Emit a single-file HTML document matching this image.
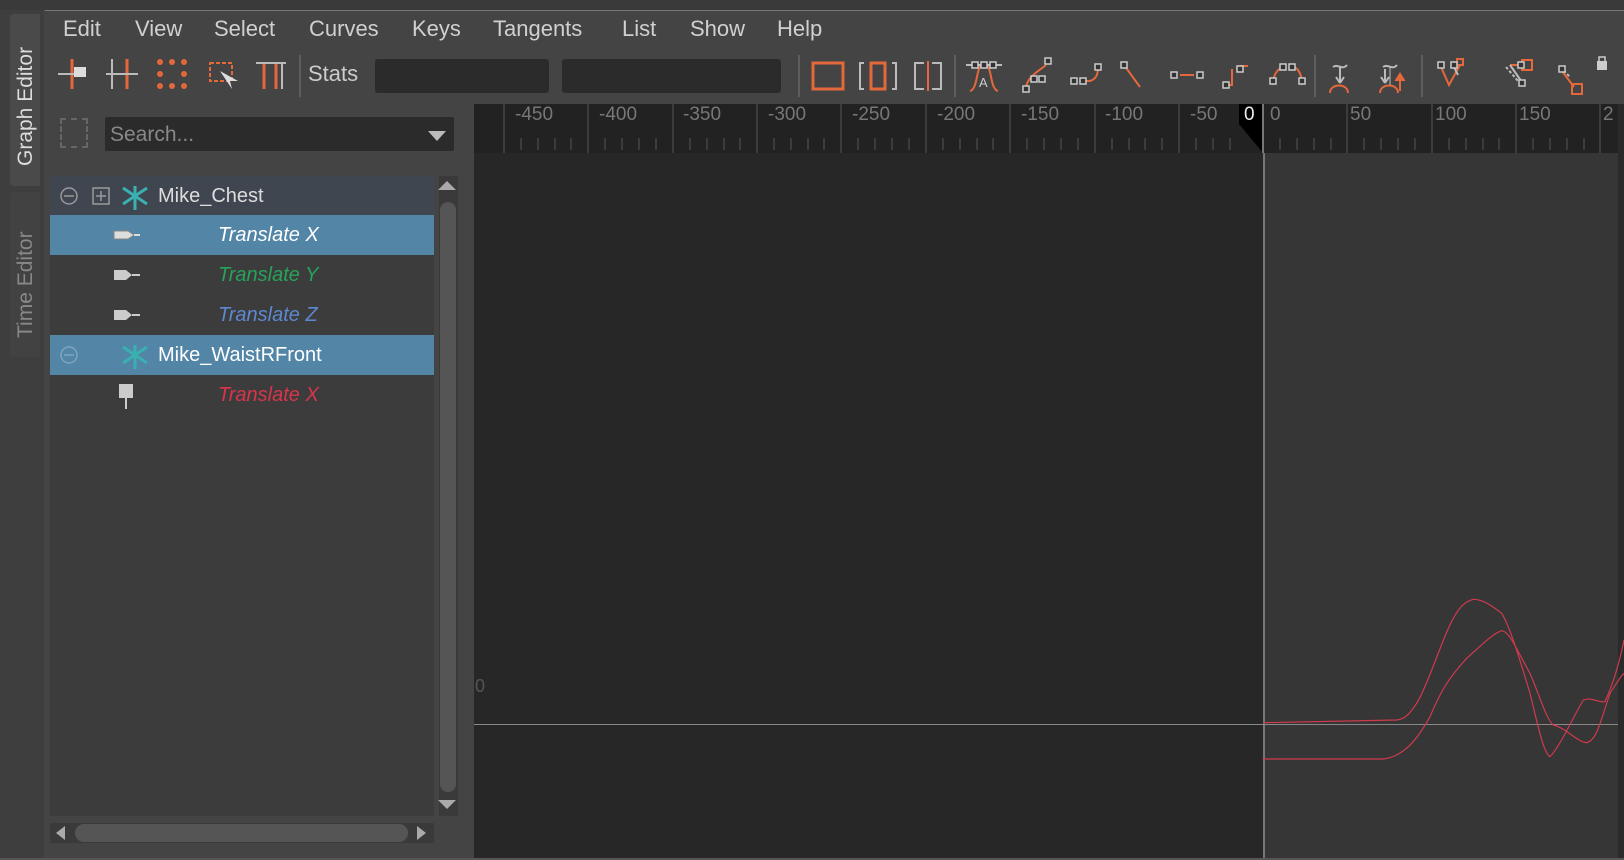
<!DOCTYPE html>
<html><head><style>
body{margin:0;width:1624px;height:860px;background:#444;overflow:hidden;font-family:"Liberation Sans",sans-serif;position:relative}
.a{position:absolute}
.menu span{position:absolute;top:16px;font-size:22px;color:#d0d0d0}
.tab{position:absolute;left:10px;width:30px;background:#4a4a4a;border-radius:4px 0 0 4px}
.vt{position:absolute;transform:rotate(-90deg);transform-origin:left top;font-size:21px;white-space:nowrap}
.row{position:absolute;left:50px;width:384px;height:40px}
.row span{position:absolute;top:9px;font-size:20px}
.it{font-style:italic}
.rl{position:absolute;top:104px;font-size:19px;color:#777}
</style></head><body>
<div class="a" style="left:0;top:0;width:1624px;height:10px;background:#3a3a3a;border-bottom:1px solid #555"></div>
<div class="a" style="left:0;top:10px;width:44px;height:850px;background:#3e3e3e"></div>
<div class="tab" style="top:14px;height:172px"></div>
<div class="vt" style="left:14px;top:166px;color:#ddd">Graph Editor</div>
<div class="tab" style="top:192px;height:165px;background:#424242"></div>
<div class="vt" style="left:14px;top:338px;color:#888">Time Editor</div>
<div class="a" style="left:45px;top:10px;width:1579px;height:1px;background:#777"></div>
<div class="menu">
<span style="left:63px">Edit</span><span style="left:135px">View</span><span style="left:214px">Select</span><span style="left:309px">Curves</span><span style="left:412px">Keys</span><span style="left:493px">Tangents</span><span style="left:622px">List</span><span style="left:690px">Show</span><span style="left:777px">Help</span>
</div>
<!-- toolbar -->
<svg class="a" style="left:0;top:55px" width="1624" height="42" fill="none" stroke-width="3">
<defs><g id="k"><rect x="-3" y="-3" width="6" height="6" fill="#333" stroke="#ccc" stroke-width="1.5"/></g></defs>
<g stroke="#e4693a">
<line x1="72" y1="4" x2="72" y2="34"/><line x1="127" y1="4" x2="127" y2="34"/>
<g fill="#e4693a" stroke="none"><circle cx="160" cy="7" r="3"/><circle cx="172" cy="7" r="3"/><circle cx="184" cy="7" r="3"/><circle cx="160" cy="19" r="3"/><circle cx="184" cy="19" r="3"/><circle cx="160" cy="31" r="3"/><circle cx="172" cy="31" r="3"/><circle cx="184" cy="31" r="3"/></g>
<rect x="210" y="8" width="22" height="18" stroke-width="2" stroke-dasharray="4 2"/>
<path d="M264 8V34M276 8V34"/>
<rect x="813" y="8" width="30" height="26"/><rect x="871" y="8" width="14" height="26"/><line x1="928" y1="6" x2="928" y2="36" stroke-width="2"/>
<!-- tangents -->
<path d="M970 36C978 34 976 12 982 10M986 10C992 12 990 34 998 36" stroke-width="2"/>
<path d="M1026 32C1028 22 1036 18 1046 10" stroke-width="2"/>
<path d="M1080 26H1090C1096 24 1098 20 1098 12" stroke-width="2"/>
<path d="M1124 10L1140 32" stroke-width="2"/>
<path d="M1180 20H1194" stroke-width="2"/>
<path d="M1226 30H1232V14M1240 11H1248" stroke-width="2"/>
<path d="M1273 30C1273 16 1281 12 1285 12M1292 12C1296 12 1302 16 1302 30" stroke-width="2"/>
<path d="M1330 38C1330 28 1348 28 1348 38M1380 38C1380 28 1398 28 1398 38M1400 22V36" stroke-width="2"/>
<path d="M1395 26L1400 18L1405 26" fill="#e4693a" stroke-width="1"/>
<path d="M1441 12L1449 30L1460 10M1510 10H1522M1562 16L1574 32" stroke-width="2"/>
<rect x="1457" y="4" width="6" height="6" stroke-width="2"/><rect x="1522" y="5" width="10" height="10" stroke-width="2"/><rect x="1572" y="29" width="10" height="10" stroke-width="2"/>
</g>
<g stroke="#bbb"><path d="M58 19H86M106 19H138M112 4V34" stroke-width="2"/><path d="M256 8H286M282 8V34" stroke-width="2"/>
<path d="M864 8H860V34H864M892 8H896V34H892M924 8H915V34H924M932 8H941V34H932" stroke-width="2"/>
<path d="M966 10H1002M1333 12C1338 8 1342 16 1347 10M1383 12C1388 8 1392 16 1397 10M1340 12V28M1385 14V28" stroke-width="2"/>
<path d="M1340 28L1336 22M1340 28L1344 22M1385 28L1381 22M1385 28L1389 22" stroke-width="2"/>
<path d="M1390 12V30" stroke-width="1"/>
<path d="M1454 12L1458 20M1510 10L1524 30" stroke-width="2"/>
<path d="M1506 12L1518 26M1560 12L1570 22" stroke-width="2" stroke-dasharray="3 2"/></g>
<use href="#k" x="975" y="10"/><use href="#k" x="984" y="10"/><use href="#k" x="993" y="10"/>
<use href="#k" x="1026" y="34"/><use href="#k" x="1034" y="24"/><use href="#k" x="1042" y="24"/><use href="#k" x="1048" y="6"/>
<use href="#k" x="1074" y="26"/><use href="#k" x="1083" y="26"/><use href="#k" x="1098" y="12"/>
<use href="#k" x="1124" y="10"/>
<use href="#k" x="1174" y="20"/><use href="#k" x="1200" y="20"/>
<use href="#k" x="1226" y="30"/><use href="#k" x="1240" y="14"/>
<use href="#k" x="1273" y="26"/><use href="#k" x="1283" y="12"/><use href="#k" x="1292" y="12"/><use href="#k" x="1302" y="26"/>
<use href="#k" x="1441" y="10"/><use href="#k" x="1454" y="10"/><use href="#k" x="1521" y="10"/><use href="#k" x="1522" y="28"/><use href="#k" x="1562" y="14"/>
<rect x="74" y="12" width="12" height="10" fill="#ddd"/>
<path d="M220 16L232 34L230 26L238 26Z" fill="#ddd"/>
<text x="979" y="32" fill="#ccc" font-size="13" font-family="Liberation Sans">A</text>
<rect x="1597" y="6" width="10" height="9" fill="#ccc"/><path d="M1599 6V2H1605V6" stroke="#ccc" stroke-width="1.5"/>
<g stroke="#666" stroke-width="1.5"><line x1="300" y1="0" x2="300" y2="42"/><line x1="799" y1="0" x2="799" y2="42"/><line x1="955" y1="0" x2="955" y2="42"/><line x1="1315" y1="0" x2="1315" y2="42"/><line x1="1422" y1="0" x2="1422" y2="42"/></g>
</svg>
<div class="a" style="left:308px;top:61px;font-size:22px;color:#ccc">Stats</div>
<div class="a" style="left:375px;top:59px;width:174px;height:34px;background:#2b2b2b;border-radius:3px"></div>
<div class="a" style="left:562px;top:59px;width:219px;height:34px;background:#2b2b2b;border-radius:3px"></div>
<!-- outliner -->
<div class="a" style="left:60px;top:118px;width:28px;height:30px;border:2px dashed #666;box-sizing:border-box"></div>
<div class="a" style="left:105px;top:117px;width:349px;height:34px;background:#2b2b2b;border-radius:2px"></div>
<div class="a" style="left:110px;top:123px;font-size:21px;color:#888">Search...</div>
<div class="a" style="left:428px;top:131px;border-left:9px solid transparent;border-right:9px solid transparent;border-top:10px solid #bbb"></div>
<div class="a" style="left:50px;top:176px;width:384px;height:640px;background:#3c3c3c"></div>
<div class="row" style="top:176px;background:#3f4650">
<svg class="a" style="left:9px;top:10px" width="120" height="24" fill="none" stroke="#999" stroke-width="1.5"><circle cx="10" cy="10" r="8"/><path d="M5 10H15"/><rect x="34" y="2" width="16" height="16"/><path d="M37 10H47M42 5V15"/><path d="M76 -4V24M64 2L88 18M64 18L88 2" stroke="#3ab0b0" stroke-width="3"/></svg>
<span style="left:108px;color:#ddd">Mike_Chest</span></div>
<div class="row" style="top:215px;background:#5285a6">
<svg class="a" style="left:62px;top:12px" width="30" height="16"><path d="M2 4H16L22 8L16 12H2Z" fill="#ddd" stroke="#888"/><rect x="22" y="7" width="6" height="2" fill="#ddd"/></svg>
<span class="it" style="left:168px;color:#fff">Translate X</span></div>
<div class="row" style="top:255px"><svg class="a" style="left:62px;top:12px" width="30" height="16"><path d="M2 3H14L20 8L14 13H2Z" fill="#ccc"/><rect x="20" y="7" width="8" height="2" fill="#ccc"/></svg><span class="it" style="left:168px;color:#27a35a">Translate Y</span></div>
<div class="row" style="top:295px"><svg class="a" style="left:62px;top:12px" width="30" height="16"><path d="M2 3H14L20 8L14 13H2Z" fill="#ccc"/><rect x="20" y="7" width="8" height="2" fill="#ccc"/></svg><span class="it" style="left:168px;color:#5d88d0">Translate Z</span></div>
<div class="row" style="top:335px;background:#5285a6">
<svg class="a" style="left:9px;top:10px" width="120" height="24" fill="none" stroke="#7fa5be" stroke-width="1.5"><circle cx="10" cy="10" r="8"/><path d="M5 10H15"/><path d="M76 -4V24M64 2L88 18M64 18L88 2" stroke="#3ab0b0" stroke-width="3"/></svg>
<span style="left:108px;color:#fff">Mike_WaistRFront</span></div>
<div class="row" style="top:375px"><svg class="a" style="left:66px;top:8px" width="20" height="28"><path d="M4 2H16V14H4Z M10 14V26" fill="#ccc" stroke="#ccc" stroke-width="2"/></svg><span class="it" style="left:168px;color:#d8354b">Translate X</span></div>
<div class="a" style="left:439px;top:176px;width:19px;height:640px;background:#3a3a3a"></div>
<div class="a" style="left:438px;top:181px;border-left:9px solid transparent;border-right:9px solid transparent;border-bottom:9px solid #aaa"></div>
<div class="a" style="left:440px;top:202px;width:16px;height:590px;background:#555;border-radius:8px"></div>
<div class="a" style="left:438px;top:800px;border-left:9px solid transparent;border-right:9px solid transparent;border-top:9px solid #aaa"></div>
<div class="a" style="left:50px;top:823px;width:384px;height:20px;background:#3a3a3a"></div>
<div class="a" style="left:56px;top:826px;border-top:7px solid transparent;border-bottom:7px solid transparent;border-right:9px solid #aaa"></div>
<div class="a" style="left:75px;top:824px;width:333px;height:18px;background:#555;border-radius:9px"></div>
<div class="a" style="left:417px;top:826px;border-top:7px solid transparent;border-bottom:7px solid transparent;border-left:9px solid #aaa"></div>
<!-- graph -->
<div class="a" style="left:474px;top:104px;width:1150px;height:754px;background:#272727"></div>
<div class="a" style="left:1263px;top:153px;width:355px;height:705px;background:#363636"></div>
<div class="a" style="left:1263px;top:153px;width:2px;height:705px;background:#777"></div>
<div class="a" style="left:474px;top:724px;width:1144px;height:1px;background:#888"></div>
<div class="a" style="left:475px;top:676px;font-size:18px;color:#555">0</div>
<div class="a" style="left:474px;top:104px;width:1150px;height:49px;background:#222"></div>
<svg class="a" style="left:474px;top:104px" width="1150" height="49">
<g stroke="#555" stroke-width="1">
<path d="M30 0V49M114 0V49M199 0V49M283 0V49M367 0V49M452 0V49M536 0V49M621 0V49M705 0V49M873 0V49M958 0V49M1042 0V49M1126 0V49"/>
<path d="M47 34V46M64 34V46M81 34V46M97 34V46M131 34V46M148 34V46M165 34V46M182 34V46M216 34V46M233 34V46M250 34V46M266 34V46M300 34V46M317 34V46M334 34V46M350 34V46M384 34V46M401 34V46M418 34V46M435 34V46M469 34V46M486 34V46M503 34V46M519 34V46M553 34V46M570 34V46M587 34V46M604 34V46M638 34V46M655 34V46M671 34V46M688 34V46M722 34V46M739 34V46M756 34V46M806 34V46M823 34V46M840 34V46M857 34V46M890 34V46M907 34V46M924 34V46M941 34V46M975 34V46M992 34V46M1009 34V46M1025 34V46M1059 34V46M1076 34V46M1093 34V46M1110 34V46"/>
</g>
<path d="M765 0H789V49L765 20Z" fill="#000"/>
<line x1="789" y1="0" x2="789" y2="49" stroke="#777" stroke-width="2"/>
</svg>
<div class="rl" style="left:515px">-450</div><div class="rl" style="left:599px">-400</div><div class="rl" style="left:683px">-350</div><div class="rl" style="left:768px">-300</div><div class="rl" style="left:852px">-250</div><div class="rl" style="left:937px">-200</div><div class="rl" style="left:1021px">-150</div><div class="rl" style="left:1105px">-100</div><div class="rl" style="left:1190px">-50</div>
<div class="rl" style="left:1244px;color:#eee">0</div><div class="rl" style="left:1270px">0</div><div class="rl" style="left:1350px">50</div><div class="rl" style="left:1435px">100</div><div class="rl" style="left:1519px">150</div><div class="rl" style="left:1603px">2</div>
<div class="a" style="left:1618px;top:104px;width:6px;height:754px;background:#2a2a2a"></div>
<svg class="a" style="left:1200px;top:560px" width="424" height="300" viewBox="0 0 1272 900" fill="none" stroke="#d23a4e" stroke-width="3.5" stroke-linejoin="round">
<path d="M190 488L590 480C615 478 630 460 650 430C680 380 720 260 745 205C770 150 790 125 820 118C850 118 880 140 905 160C930 200 960 300 990 400C1010 480 1030 580 1050 590C1080 560 1120 470 1150 420C1175 410 1200 430 1215 425C1240 370 1260 300 1272 240"/>
<path d="M188 597L550 597C600 590 640 560 690 470C720 400 740 360 800 295C850 250 880 220 905 212C930 215 950 270 990 340C1020 410 1040 480 1060 495C1100 505 1130 545 1160 548C1190 540 1200 490 1230 400C1250 370 1260 350 1272 340"/>
</svg>
<div class="a" style="left:0;top:858px;width:1624px;height:2px;background:#555"></div>
</body></html>
